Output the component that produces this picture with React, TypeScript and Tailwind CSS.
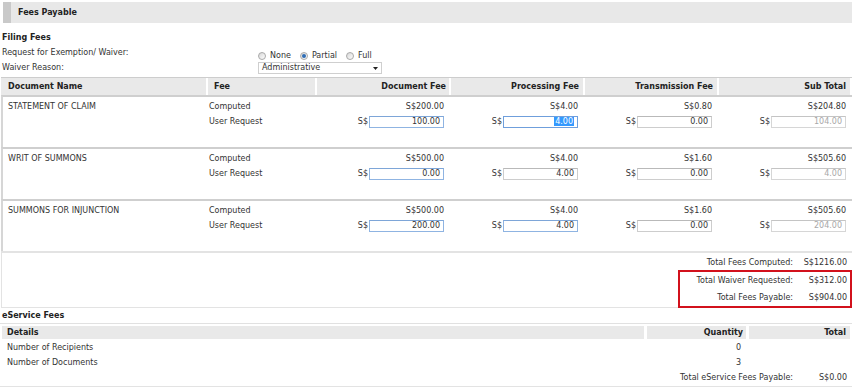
import React from 'react';

type Tone = 'blue' | 'gray' | 'disabled' | 'selected';

type Fee = { computed: string; request: string; tone: Tone };

const documents: { name: string; fees: Fee[] }[] = [
  {
    name: 'STATEMENT OF CLAIM',
    fees: [
      { computed: 'S$200.00', request: '100.00', tone: 'blue' },
      { computed: 'S$4.00', request: '4.00', tone: 'selected' },
      { computed: 'S$0.80', request: '0.00', tone: 'gray' },
      { computed: 'S$204.80', request: '104.00', tone: 'disabled' },
    ],
  },
  {
    name: 'WRIT OF SUMMONS',
    fees: [
      { computed: 'S$500.00', request: '0.00', tone: 'blue' },
      { computed: 'S$4.00', request: '4.00', tone: 'gray' },
      { computed: 'S$1.60', request: '0.00', tone: 'gray' },
      { computed: 'S$505.60', request: '4.00', tone: 'disabled' },
    ],
  },
  {
    name: 'SUMMONS FOR INJUNCTION',
    fees: [
      { computed: 'S$500.00', request: '200.00', tone: 'blue' },
      { computed: 'S$4.00', request: '4.00', tone: 'blue' },
      { computed: 'S$1.60', request: '0.00', tone: 'gray' },
      { computed: 'S$505.60', request: '204.00', tone: 'disabled' },
    ],
  },
];

const toneClass: Record<Tone, string> = {
  blue: 'border-[#8fb4e2] border-t-[#7ea6d8] text-[#333]',
  selected: 'border-[#6f9fdc] text-[#333]',
  gray: 'border-[#cdcdcd] border-t-[#b9b9b9] text-[#333]',
  disabled: 'border-[#d6d6d6] border-t-[#c4c4c4] text-[#a8a8a8]',
};

function FeeBox({ value, tone }: { value: string; tone: Tone }) {
  return (
    <div
      className={`flex h-[12px] w-[75px] items-center justify-end border bg-white pr-[3px] ${toneClass[tone]}`}
    >
      {tone === 'selected' ? (
        <span className="bg-[#3399ff] px-[1px] leading-[9px] text-white">{value}</span>
      ) : (
        value
      )}
    </div>
  );
}

function Radio({ checked, label }: { checked?: boolean; label: string }) {
  return (
    <span className="flex items-center">
      <span className="flex h-[8px] w-[8px] items-center justify-center rounded-full border border-[#a9a9a9] bg-linear-to-br from-[#d6d6d6] to-white">
        {checked && <span className="h-[4px] w-[4px] rounded-full bg-[#2f6db5]" />}
      </span>
      <span className="ml-[4px]">{label}</span>
    </span>
  );
}

const tableCols = 'grid grid-cols-[203px_109px_134px_134px_134px_134px]';

export default function App() {
  return (
    <div className="h-[388px] w-[852px] overflow-hidden bg-white font-['DejaVu_Sans',Verdana,sans-serif] text-[8px] text-[#333]">
      {/* Section bar */}
      <div className="pt-[2px]">
        <div className="ml-[3px] flex h-[21px] bg-[#e8e8e8]">
          <div className="w-[8px] bg-[#c9c9c9]" />
          <div className="flex items-center pl-[7px] font-bold text-[#222]">Fees Payable</div>
        </div>
      </div>

      {/* Filing fees */}
      <div className="mt-[8px] flex h-[14px] items-center pl-[2px] font-bold text-[#222]">Filing Fees</div>
      <div className="grid grid-cols-[256px_1fr] pl-[2px]">
        <div className="flex h-[15px] items-center">Request for Exemption/ Waiver:</div>
        <div className="flex h-[15px] items-center gap-[9px] pt-[6px]">
          <Radio label="None" />
          <Radio label="Partial" checked />
          <Radio label="Full" />
        </div>
        <div className="flex h-[15px] items-center">Waiver Reason:</div>
        <div className="flex h-[15px] items-center pt-[1px]">
          <div className="flex h-[12px] w-[124px] items-center justify-between border border-[#cfcfcf] pl-[3px] pr-[3px]">
            <span>Administrative</span>
            <svg width="5" height="3" viewBox="0 0 5 3">
              <path d="M0 0h5L2.5 3z" fill="#222" />
            </svg>
          </div>
        </div>
      </div>

      {/* Fee table */}
      <div className="ml-[1px] mt-[2px]">
        <div className="grid h-[18px] grid-cols-[205px_109px_134px_134px_134px_133px] border-t border-[#cdcdcd] font-bold text-[#222]">
          <div className="flex items-center bg-[#e9e9e9] pl-[7px]">Document Name</div>
          <div className="flex items-center border-l-2 border-white bg-[#e9e9e9] pl-[6px]">Fee</div>
          <div className="flex items-center justify-end border-l-2 border-white bg-[#e9e9e9] pr-[3px]">Document Fee</div>
          <div className="flex items-center justify-end border-l-2 border-white bg-[#e9e9e9] pr-[4px]">Processing Fee</div>
          <div className="flex items-center justify-end border-l-2 border-white bg-[#e9e9e9] pr-[4px]">Transmission Fee</div>
          <div className="flex items-center justify-end border-l-2 border-white bg-[#e9e9e9] pr-[4px]">Sub Total</div>
        </div>

        <div className="border-b-2 border-[#e3e3e3]">
          {documents.map((doc) => (
            <div
              key={doc.name}
              className={`${tableCols} h-[52px] border-l-2 border-t-2 border-[#cfcfcf] border-l-[#d6d6d6] pt-[2px]`}
            >
              <div className="flex h-[15px] items-center pl-[5px]">{doc.name}</div>
              <div className="flex flex-col pl-[3px]">
                <span className="flex h-[15px] items-center">Computed</span>
                <span className="flex h-[15px] items-center">User Request</span>
              </div>
              {doc.fees.map((fee, i) => (
                <div key={i} className="flex flex-col items-end pr-[5px]">
                  <span className="flex h-[15px] items-center">{fee.computed}</span>
                  <span className="flex h-[15px] items-center gap-[1px]">
                    <span>S$</span>
                    <FeeBox value={fee.request} tone={fee.tone} />
                  </span>
                </div>
              ))}
            </div>
          ))}
        </div>

        {/* Totals */}
        <div className="h-[55px] border-b border-l border-[#e3e3e3] pt-[2px]">
          <div className="ml-auto w-[174px]">
            <div className="grid h-[15px] grid-cols-[113px_57px] items-center border-x-2 border-transparent">
              <span className="text-right">Total Fees Computed:</span>
              <span className="pr-[3px] text-right">S$1216.00</span>
            </div>
            <div className="border-2 border-[#d2111c]">
              <div className="grid h-[17px] grid-cols-[113px_57px] items-center">
                <span className="text-right">Total Waiver Requested:</span>
                <span className="pr-[3px] text-right">S$312.00</span>
              </div>
              <div className="grid h-[17px] grid-cols-[113px_57px] items-center">
                <span className="text-right">Total Fees Payable:</span>
                <span className="pr-[3px] text-right">S$904.00</span>
              </div>
            </div>
          </div>
        </div>
      </div>

      {/* eService fees */}
      <div className="flex h-[16px] items-center border-b border-[#e1e1e1] pl-[2px] font-bold text-[#222]">
        eService Fees
      </div>
      <div className="ml-[2px] mt-[2px] grid h-[13px] grid-cols-[642px_102px_104px] font-bold text-[#222]">
        <div className="flex items-center bg-[#e9e9e9] pl-[5px]">Details</div>
        <div className="flex items-center justify-end border-l-[3px] border-white bg-[#e9e9e9] pr-[3px]">Quantity</div>
        <div className="flex items-center justify-end border-l-[3px] border-white bg-[#e9e9e9] pr-[4px]">Total</div>
      </div>
      <div className="mt-[1px] border-b border-[#e3e3e3] pb-[1px]">
        <div className="ml-[2px] grid grid-cols-[642px_102px_104px]">
          <span className="flex h-[15px] items-center pl-[5px]">Number of Recipients</span>
          <span className="flex h-[15px] items-center justify-end pr-[5px]">0</span>
          <span />
          <span className="flex h-[15px] items-center pl-[5px]">Number of Documents</span>
          <span className="flex h-[15px] items-center justify-end pr-[5px]">3</span>
          <span />
        </div>
        <div className="ml-auto grid h-[15px] w-[174px] grid-cols-[115px_59px] items-center">
          <span className="text-right">Total eService Fees Payable:</span>
          <span className="pr-[5px] text-right">S$0.00</span>
        </div>
      </div>
    </div>
  );
}
